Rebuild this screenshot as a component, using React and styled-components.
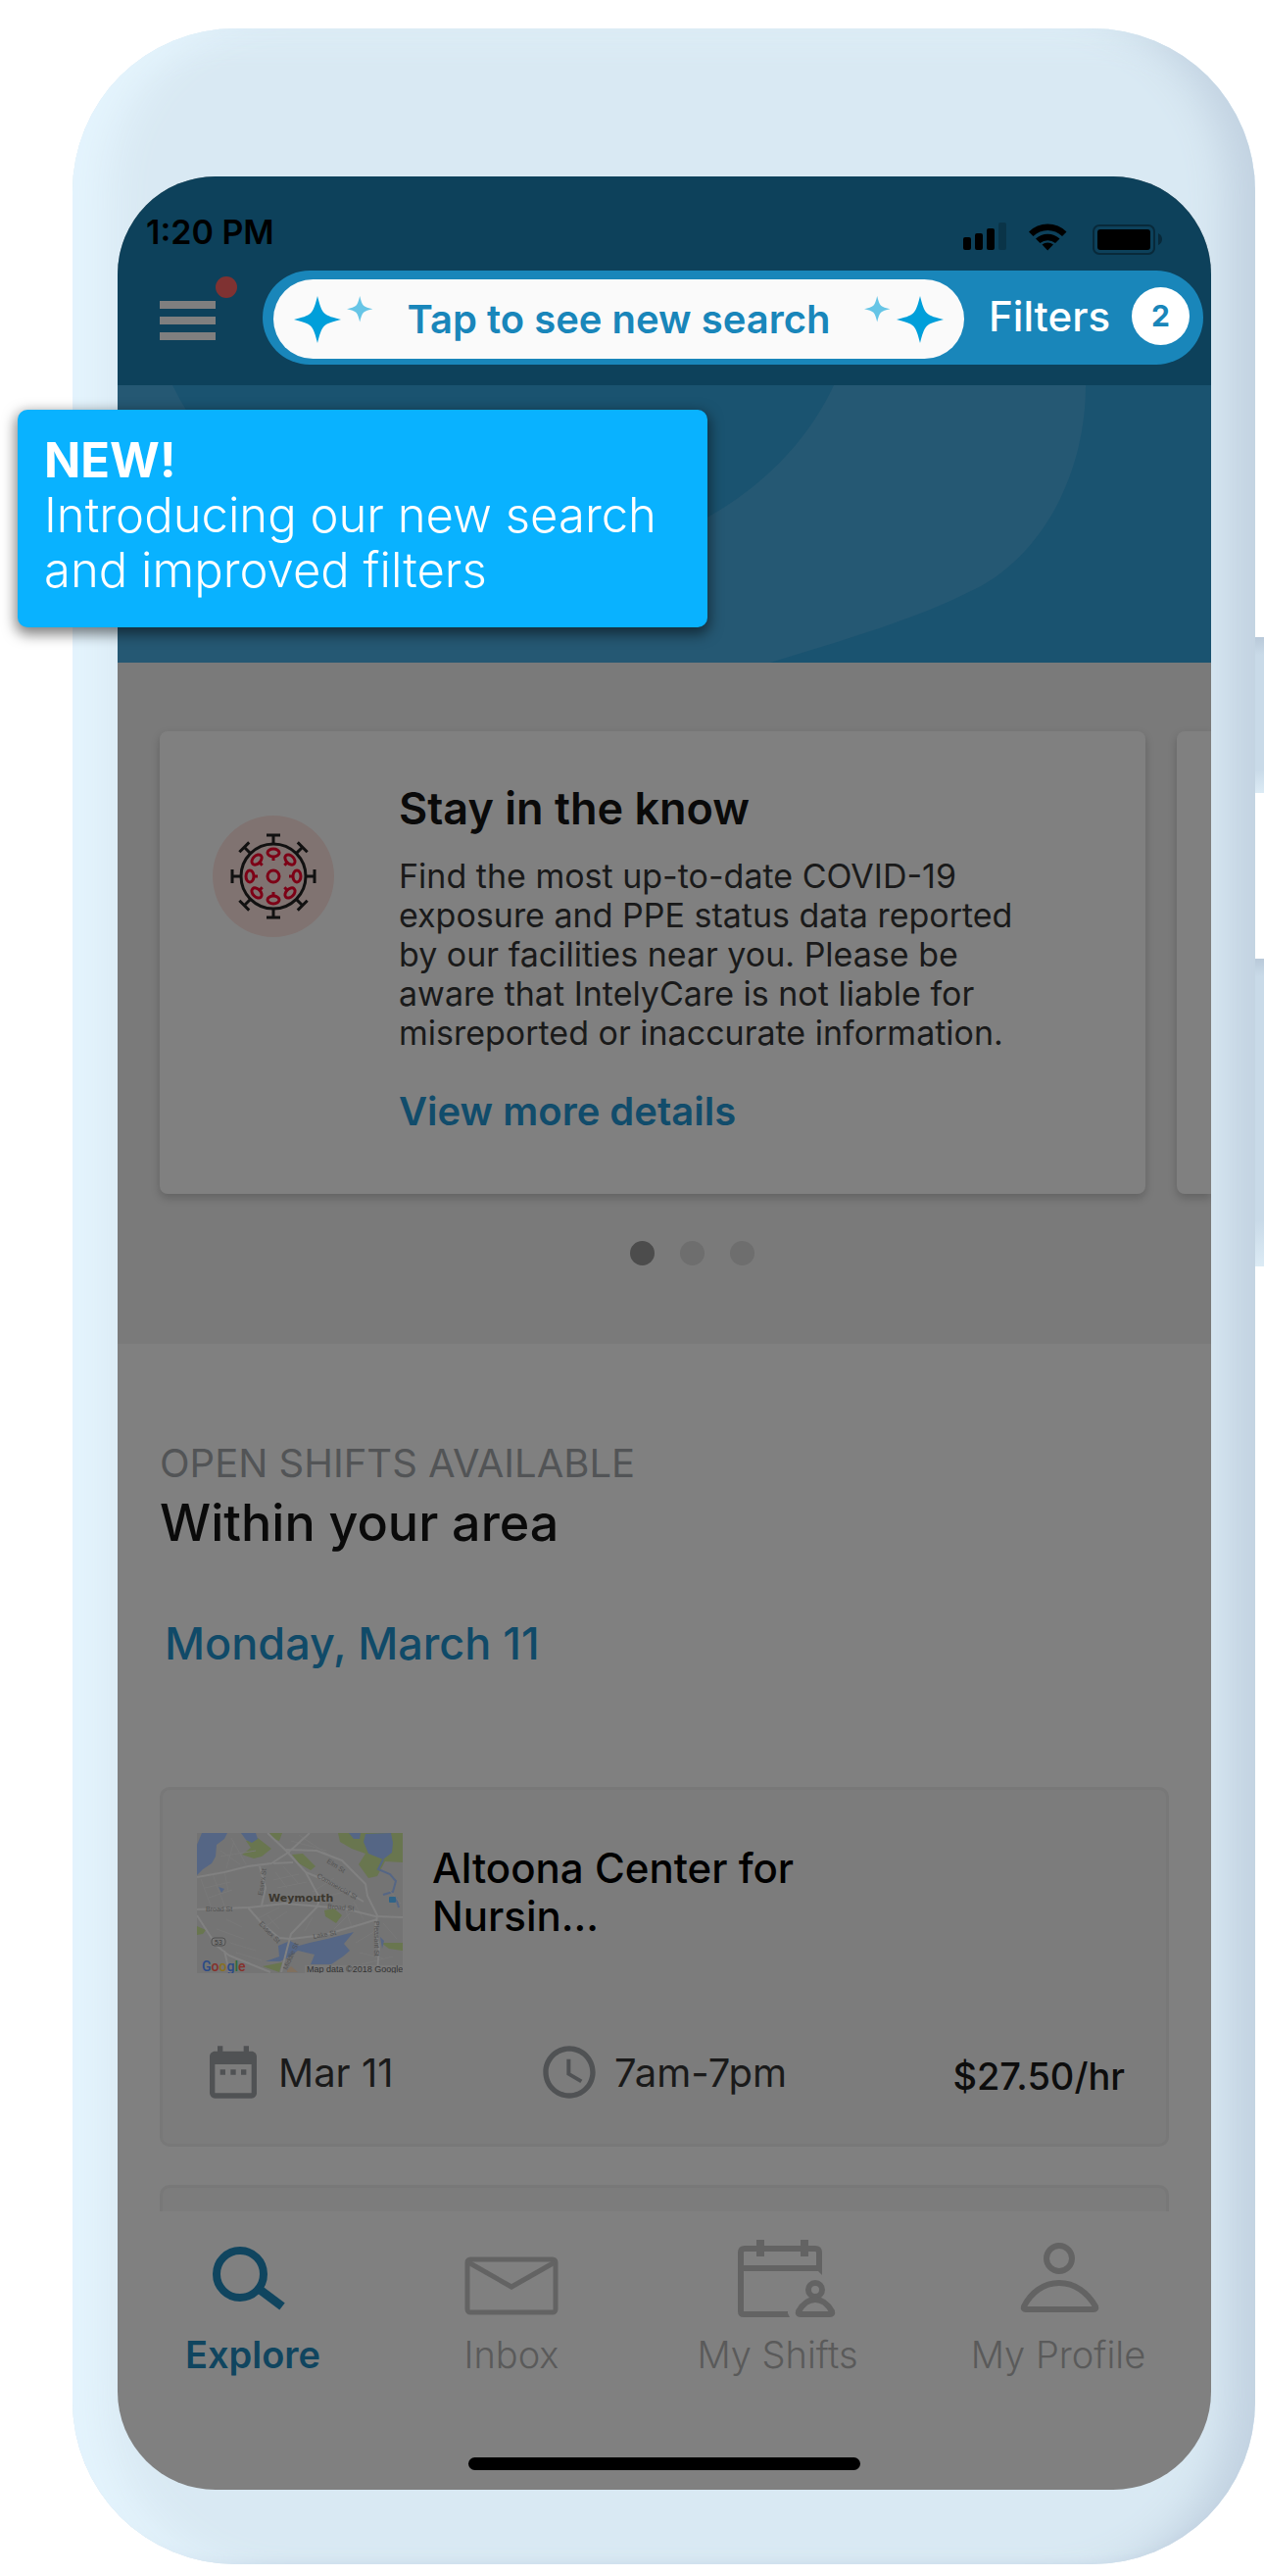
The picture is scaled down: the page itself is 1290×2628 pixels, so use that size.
import React from "react";
import styled, { createGlobalStyle } from "styled-components";
import { MdDateRange, MdAccessTime } from "react-icons/md";

const GlobalStyle = createGlobalStyle`
  * {
    box-sizing: border-box;
  }

  body {
    margin: 0;
    background: #ffffff;
    font-family: Inter, "Open Sans", sans-serif;
    overflow-x: hidden;
  }

  h1, h2, h3, p {
    margin: 0;
    font-weight: 400;
  }

  button {
    border: none;
    background: none;
    padding: 0;
    font: inherit;
    color: inherit;
    cursor: pointer;
  }

  a {
    color: inherit;
    text-decoration: none;
  }

  svg {
    display: block;
    flex-shrink: 0;
  }
`;

const Page = styled.div`
  position: relative;
  padding: 29px 9px 12px 74px;
`;

const Phone = styled.div`
  position: relative;
  padding: 151px 45px 76px 46px;
  border-radius: 166px;
  background: #d9e9f3;
  box-shadow: inset 56px 0 44px -20px #e4f4fd, inset -50px 0 40px -22px #c2d2e1,
    inset 0 22px 30px -8px #deeef7, inset 0 -6px 8px -4px #c9d9e8;
`;

// 폰 오른쪽 버튼
const SideButton = styled.span`
  position: absolute;
  left: 100%;
  top: ${(props) => props.$top}px;
  width: 20px;
  height: ${(props) => props.$height}px;
  background: linear-gradient(#b9c9d9, #c9dae8 18px, #c9dae8 85%, #dcebf5);
`;

const Screen = styled.div`
  border-radius: 100px;
  overflow: hidden;
  background: #808080;
`;

const Header = styled.header`
  background: #0d415b;
  color: #000000;
`;

const StatusBar = styled.div`
  display: flex;
  justify-content: space-between;
  align-items: flex-end;
  padding: 34px 50px 16px 29px;
  font-size: 34px;
  line-height: 46px;
  font-weight: 600;
`;

const TopBar = styled.div`
  display: flex;
  gap: 48px;
  padding: 0 8px 21px 43px;
`;

const MenuButton = styled.button`
  position: relative;
  width: 57px;
  height: 40px;
  margin-top: 31px;
  display: flex;
  flex-direction: column;
  justify-content: space-between;

  > span {
    width: 100%;
    height: 8px;
    background: #7f7f7f;
  }

  > .badge {
    position: absolute;
    top: -25px;
    left: 100%;
    width: 22px;
    height: 22px;
    border-radius: 50%;
    background: #7f3232;
  }
`;

const SearchPill = styled.div`
  flex: 1;
  display: flex;
  gap: 25px;
  height: 96px;
  padding: 9px 14px 6px 11px;
  border-radius: 48px;
  background: #1986ba;
`;

const SearchButton = styled.button`
  flex: 1;
  display: flex;
  align-items: center;
  justify-content: space-between;
  padding: 0 21px;
  border-radius: 41px;
  background: #fafafa;
  color: #1986ba;
  font-size: 40px;
  font-weight: 600;
`;

const FilterButton = styled.button`
  display: flex;
  align-items: center;
  gap: 22px;
  padding-bottom: 6px;
  color: #ffffff;
  font-size: 42px;
  font-weight: 500;

  > .count {
    width: 59px;
    height: 59px;
    border-radius: 50%;
    background: #ffffff;
    color: #1986ba;
    font-size: 30px;
    line-height: 59px;
    font-weight: 700;
  }
`;

const Hero = styled.div`
  height: 283px;
  background: #1a5370;

  > svg {
    width: 100%;
    height: 100%;
  }
`;

const NewTip = styled.div`
  position: absolute;
  top: 418px;
  left: 18px;
  width: 704px;
  padding: 24px 20px 30px 27px;
  border-radius: 10px;
  background: #09b2ff;
  box-shadow: 0 5px 14px 2px rgba(0, 0, 0, 0.5);
  color: #ffffff;
  font-size: 49px;
  line-height: 56px;
  font-weight: 300;

  > strong {
    display: block;
    font-weight: 700;
  }
`;

const Carousel = styled.section`
  padding: 70px 0 80px 43px;
  background: #7a7a7a;
`;

const CarouselTrack = styled.div`
  display: flex;
  gap: 32px;
`;

const InfoCard = styled.article`
  flex: 1;
  display: flex;
  gap: 66px;
  padding: 53px 54px 60px 54px;
  border-radius: 8px;
  background: #808080;
  box-shadow: 0 4px 10px rgba(0, 0, 0, 0.2);

  > svg {
    margin-top: 33px;
  }
`;

const NextCard = styled.div`
  width: 35px;
  border-radius: 8px 0 0 8px;
  background: #808080;
  box-shadow: 0 4px 10px rgba(0, 0, 0, 0.2);
`;

const InfoText = styled.div`
  > h2 {
    color: #0a0a0a;
    font-size: 45px;
    line-height: 52px;
    font-weight: 600;
  }

  > p {
    margin: 23px 0 36px;
    color: #1a1a1a;
    font-size: 34px;
    line-height: 40px;
  }

  > a {
    display: block;
    color: #114c6b;
    font-size: 40px;
    line-height: 48px;
    font-weight: 600;
  }
`;

const Dots = styled.div`
  display: flex;
  justify-content: center;
  gap: 26px;
  margin-top: 48px;
  padding-left: 13px;
`;

const Dot = styled.button`
  width: 25px;
  height: 25px;
  border-radius: 50%;
  background: ${(props) => (props.$active ? "#4c4c4c" : "#6e6e6e")};
`;

const Shifts = styled.section`
  padding: 99px 43px 0;

  > .label {
    color: #525456;
    font-size: 40px;
    line-height: 46px;
  }

  > h1 {
    margin-top: 10px;
    color: #0a0a0a;
    font-size: 52px;
    line-height: 56px;
    font-weight: 500;
  }

  > h2 {
    margin: 70px 0 121px;
    padding-left: 5px;
    color: #104a68;
    font-size: 45px;
    line-height: 50px;
    font-weight: 500;
  }
`;

const ShiftCard = styled.article`
  border: 3px solid #787878;
  border-radius: 10px;
  background: #7c7c7c;
  padding: 44px 42px 41px 35px;
`;

const NextShift = styled.div`
  height: 27px;
  margin-top: 39px;
  border: 3px solid #787878;
  border-bottom: none;
  border-radius: 10px 10px 0 0;
  background: #7c7c7c;
`;

const Facility = styled.div`
  display: flex;
  gap: 30px;

  > h3 {
    width: 440px;
    margin-top: 11px;
    color: #000000;
    font-size: 42px;
    line-height: 49px;
    font-weight: 500;
  }
`;

const ShiftMeta = styled.div`
  display: grid;
  grid-template-columns: 343px 1fr auto;
  align-items: center;
  margin-top: 69px;
  padding-left: 5px;
  color: #1a1a1a;
  font-size: 40px;

  > div {
    display: flex;
    align-items: center;
    gap: 14px;
  }

  svg {
    color: #505254;
  }

  > .price {
    padding-top: 8px;
    color: #0d0d0d;
    font-size: 38px;
    font-weight: 500;
  }
`;

const TabBar = styled.nav`
  display: grid;
  grid-template-columns: 276fr 252fr 291fr 282fr;
  padding: 29px 15px 0 0;
`;

const Tab = styled.a`
  display: flex;
  flex-direction: column;
  align-items: center;
  gap: 15px;
  color: ${(props) => (props.$active ? "#10455f" : "#5a5a5a")};
  font-size: 38px;
  line-height: 44px;
  font-weight: ${(props) => (props.$active ? 600 : 300)};

  > svg {
    color: ${(props) => (props.$active ? "#10455f" : "#636363")};
  }
`;

const HomeBar = styled.div`
  width: 400px;
  height: 13px;
  margin: 83px auto 20px;
  border-radius: 7px;
  background: #000000;
`;

const STAR =
  "M24 0C26 8 28 15 31 17.5C34 20.5 40 22 48 24C40 26 34 27.5 31 30.5C28 33 26 40 24 48C22 40 20 33 17 30.5C14 27.5 8 26 0 24C8 22 14 20.5 17 17.5C20 15 22 8 24 0Z";

const Stars = ({ flip }) => (
  <svg width="81" height="48" viewBox="0 0 81 48" aria-hidden="true">
    <path d={STAR} fill="#009fda" transform={flip ? "translate(33 0)" : undefined} />
    <path
      d={STAR}
      fill="#66c5e6"
      transform={flip ? "scale(0.55)" : "translate(54 0) scale(0.55)"}
    />
  </svg>
);

const StatusIcons = () => (
  <svg width="203" height="33" viewBox="0 0 203 33" aria-hidden="true">
    <rect x="0" y="15" width="8" height="13" rx="2" />
    <rect x="12" y="11" width="8" height="17" rx="2" />
    <rect x="24" y="6" width="8" height="22" rx="2" />
    <rect x="36" y="0" width="8" height="28" rx="2" fill="#0a3448" />
    <path d="M67 9.500A27 27 0 0 1 105.500 9.500L101 14A21 21 0 0 0 71.500 14Z" />
    <path d="M74 16.500A18 18 0 0 1 98.500 16.500L94 21A12 12 0 0 0 78.500 21Z" />
    <path d="M80.500 22.500A9 9 0 0 1 92 22.500L86.200 28.500Z" />
    <rect x="133" y="3" width="62" height="29" rx="6" fill="none" stroke="#08293a" strokeWidth="2" />
    <rect x="137" y="7" width="54" height="21" rx="3" />
    <path d="M199 11q4 2 4 6t-4 6z" fill="#08293a" />
  </svg>
);

const Virus = () => (
  <svg width="124" height="124" viewBox="-62 -62 124 124" fill="none" aria-hidden="true">
    <circle r="62" fill="#807371" />
    <g strokeWidth="3">
      <circle r="33" stroke="#111111" />
      <circle r="6" stroke="#7d0016" />
      {[0, 45, 90, 135, 180, 225, 270, 315].map((deg) => (
        <g key={deg} transform={`rotate(${deg})`}>
          <path d="M0 -33V-42M-7 -42H7" stroke="#111111" />
          <ellipse cy="-24" rx="6" ry="4" stroke="#7d0016" />
          <path d="M0 -20V-16" stroke="#7d0016" />
        </g>
      ))}
    </g>
  </svg>
);

const MapThumb = () => (
  <svg
    width="210"
    height="143"
    viewBox="0 0 210 143"
    fontFamily="'Liberation Sans', sans-serif"
    role="img"
    aria-label="Map"
  >
    <rect width="210" height="143" fill="#747474" />
    <g fill="#69764f">
      <path d="M144 0H210V30L192 29L184 44L175 46L165 32L172 21L158 16L146 9Z" />
      <path d="M97 22L108 21L121 34L116 38L104 31Z" />
      <path d="M50 8L62 5L76 16L66 24L58 26L46 22L55 15Z" />
      <path d="M74 0H87L84 8L78 6Z" />
      <path d="M130 79L140 77L148 84L142 92L131 85Z" />
      <path d="M0 95L9 99L6 103L0 104Z" />
      <path d="M188 112L210 112V120L196 118Z" />
      <path d="M67 136L87 132L84 142Z" />
    </g>
    <g fill="#556685">
      <path d="M5 0H31L28 6L20 12L19 24L15 31L6 37L0 43V12Z" />
      <path d="M45 0H60L62 6L56 10L50 7Z" />
      <path d="M172 1L198 0L200 10L199 20L190 27L175 21L170 9Z" />
      <path d="M155 0H167L166 6L160 6Z" />
      <path d="M70 131L84 126L83 115L95 110L104 115L115 112L133 108L160 101L150 113L156 120L149 126L137 134H116L120 124L103 120L95 126L85 131Z" />
      <path d="M22 55L28 57L25 61Z" />
      <path d="M187 106L191 110L189 118Z" />
    </g>
    <path d="M92 140L96 136L103 142H92Z" fill="#80705f" />
    <g fill="none" stroke="#556685" strokeWidth="2">
      <path d="M190 27L185 37L197 42L203 49L200 60L190 63" />
      <path d="M203 66L206 76" />
    </g>
    <g fill="none" stroke="#797979" strokeWidth="1">
      <path d="M4 47L14 74M16 42L28 74M28 39L32 60M8 56L34 50M12 66L36 58M24 18L44 32M35 5L50 32M24 24L60 18M38 8L30 36" />
      <path d="M80 40L92 56M88 34L104 52M78 48L104 42M82 56L112 50M96 8L132 18M104 2L140 26M118 60L140 46M128 66L150 60" />
      <path d="M60 88L84 76M66 98L92 80M72 84L84 98M110 100L118 86M140 98L156 82M158 96L150 74M196 58L208 72M162 112L182 100M166 122L190 128" />
      <path d="M30 88L46 96M20 98L48 108M34 112L60 120M40 122L66 130M160 70L170 88M190 92L204 108M168 134L200 126" />
    </g>
    <g fill="none" stroke="#818181" strokeWidth="2" strokeLinejoin="round">
      <path d="M72 0L91 18L111 40L125 66L123 75L96 103L92 118L86 142" />
      <path d="M115 0L93 20L76 31L52 34L28 40L0 45" />
      <path d="M91 17L122 18L148 28L172 52L174 64L184 84L182 98L186 116L184 142" />
      <path d="M0 78L52 76L90 72L150 77L182 85L210 86" />
      <path d="M52 76L66 92L84 107L96 108L130 104L168 93L184 88" />
      <path d="M64 34L70 56L66 74M111 40L140 52L170 70M78 31L98 30" />
      <path d="M0 84L20 115L33 125L75 142M28 120L33 142" />
    </g>
    <g fontSize="7" fill="#515151">
      <text x="9" y="80">Broad St</text>
      <text x="133" y="77" transform="rotate(5 133 77)">Broad St</text>
      <text x="132" y="30" transform="rotate(32 132 30)">Elm St</text>
      <text x="122" y="45" transform="rotate(30 122 45)">Commercial St</text>
      <text x="63" y="93" transform="rotate(46 63 93)">Essex St</text>
      <text x="119" y="108" transform="rotate(-10 119 108)">Lake St</text>
      <text x="67" y="64" transform="rotate(-82 67 64)">Essex St</text>
      <text x="181" y="90" transform="rotate(90 181 90)">Pleasant St</text>
      <text x="92" y="140" transform="rotate(-66 92 140)">Middle St</text>
    </g>
    <rect x="15" y="107" width="14" height="8" rx="3" fill="#777777" stroke="#515151" />
    <text x="18" y="114" fontSize="7" fill="#3a3a3a">53</text>
    <rect x="196" y="65" width="7" height="6" rx="1" fill="#2f6488" />
    <text
      x="73"
      y="70"
      fontFamily="'DejaVu Sans', sans-serif"
      fontSize="11"
      fontWeight="700"
      fill="#3b372f"
    >
      Weymouth
    </text>
    <rect x="110" y="135" width="100" height="8" fill="#7a7a7a" />
    <text x="112" y="142" fontSize="9" fill="#333333">Map data ©2018 Google</text>
    <text x="5" y="141" fontFamily="Roboto, sans-serif" fontSize="14" fontWeight="500">
      <tspan fill="#2b4a86">G</tspan>
      <tspan fill="#86302b">o</tspan>
      <tspan fill="#8a7020">o</tspan>
      <tspan fill="#2b4a86">g</tspan>
      <tspan fill="#2c6b3c">l</tspan>
      <tspan fill="#86302b">e</tspan>
    </text>
  </svg>
);

const TabIcon = ({ children }) => (
  <svg
    width="120"
    height="80"
    viewBox="0 0 120 80"
    fill="none"
    stroke="currentColor"
    strokeWidth="6"
    aria-hidden="true"
  >
    {children}
  </svg>
);

const tabs = [
  {
    name: "Explore",
    active: true,
    icon: (
      <TabIcon>
        <circle cx="47" cy="35" r="24" strokeWidth="8" />
        <path d="M66 50L90 68" strokeWidth="9" />
      </TabIcon>
    ),
  },
  {
    name: "Inbox",
    icon: (
      <TabIcon>
        <rect x="15" y="20" width="90" height="54" rx="3" strokeWidth="5" />
        <path d="M16 23L60 48L104 23" strokeWidth="5" />
      </TabIcon>
    ),
  },
  {
    name: "My Shifts",
    icon: (
      <TabIcon>
        <path d="M70 76H25q-3 0 -3 -3V13q0 -4 4 -4H98q4 0 4 4V29M22 29H105" />
        <path d="M42 0V17M87 0V17" strokeWidth="8" />
        <path d="M99 30H105V36Z M69 73L72 79H66Z" fill="currentColor" stroke="none" />
        <circle cx="98" cy="51" r="7" />
        <path d="M98 61C90 61 85 66 81 73Q80 76 83 76H113Q116 76 115 73C111 66 106 61 98 61Z" />
      </TabIcon>
    ),
  },
  {
    name: "My Profile",
    icon: (
      <TabIcon>
        <circle cx="61" cy="19" r="13" />
        <path d="M61 44C45 44 32 54 25 68Q24 71 27 71H96Q99 71 98 68C90 54 77 44 61 44Z" />
      </TabIcon>
    ),
  },
];

const App = () => {
  return (
    <>
      <GlobalStyle />
      <Page>
        <Phone>
          <SideButton $top={621} $height={159} />
          <SideButton $top={949} $height={314} />
          <Screen>
            <Header>
              <StatusBar>
                <span>1:20 PM</span>
                <StatusIcons />
              </StatusBar>
              <TopBar>
                <MenuButton aria-label="Menu">
                  <span />
                  <span />
                  <span />
                  <span className="badge" />
                </MenuButton>
                <SearchPill>
                  <SearchButton>
                    <Stars />
                    Tap to see new search
                    <Stars flip />
                  </SearchButton>
                  <FilterButton>
                    Filters
                    <span className="count">2</span>
                  </FilterButton>
                </SearchPill>
              </TopBar>
            </Header>

            <Hero>
              <svg viewBox="0 0 1116 283" preserveAspectRatio="none" aria-hidden="true">
                <path
                  d="M0 0H56C110 110 230 190 380 190C520 190 670 130 731 0H988C988 95 940 175 877 207C815 239 740 260 666 283H0Z"
                  fill="#255873"
                />
              </svg>
            </Hero>

            <Carousel>
              <CarouselTrack>
                <InfoCard>
                  <Virus />
                  <InfoText>
                    <h2>Stay in the know</h2>
                    <p>
                      Find the most up-to-date COVID-19
                      <br />
                      exposure and PPE status data reported
                      <br />
                      by our facilities near you. Please be
                      <br />
                      aware that IntelyCare is not liable for
                      <br />
                      misreported or inaccurate information.
                    </p>
                    <a href="#details">View more details</a>
                  </InfoText>
                </InfoCard>
                <NextCard />
              </CarouselTrack>
              <Dots>
                {[0, 1, 2].map((idx) => (
                  <Dot key={idx} $active={idx === 0} aria-label={`Card ${idx + 1}`} />
                ))}
              </Dots>
            </Carousel>

            <Shifts>
              <p className="label">OPEN SHIFTS AVAILABLE</p>
              <h1>Within your area</h1>
              <h2>Monday, March 11</h2>
              <ShiftCard>
                <Facility>
                  <MapThumb />
                  <h3>Altoona Center for Nursin...</h3>
                </Facility>
                <ShiftMeta>
                  <div>
                    <MdDateRange size={64} />
                    Mar 11
                  </div>
                  <div>
                    <MdAccessTime size={64} />
                    7am-7pm
                  </div>
                  <span className="price">$27.50/hr</span>
                </ShiftMeta>
              </ShiftCard>
              <NextShift />
            </Shifts>

            <TabBar>
              {tabs.map((tab) => (
                <Tab key={tab.name} href="#" $active={tab.active}>
                  {tab.icon}
                  {tab.name}
                </Tab>
              ))}
            </TabBar>
            <HomeBar />
          </Screen>
        </Phone>

        <NewTip>
          <strong>NEW!</strong>
          Introducing our new search
          <br />
          and improved filters
        </NewTip>
      </Page>
    </>
  );
};

export default App;
